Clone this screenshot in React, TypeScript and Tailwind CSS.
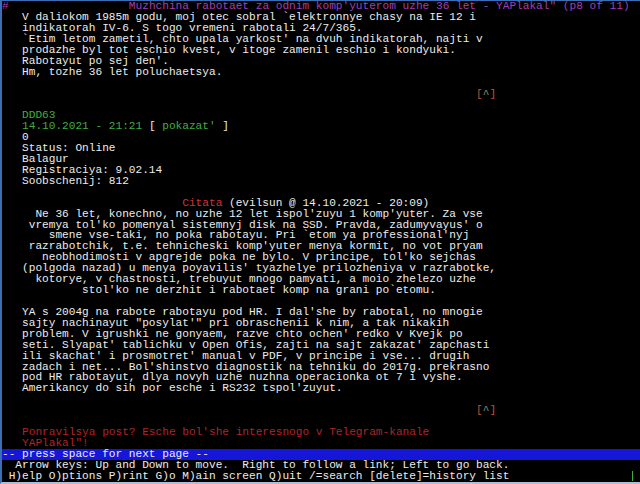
const W = 'text-[#ececec]';
const G = 'text-[#3fae3f]';
const R = 'text-[#d03434]';
const DR = 'text-[#b02424]';
const M = 'text-[#a43fb3]';

type Seg = [string, string];

function Line({ segs = [], bar = false, children }: { segs?: Seg[]; bar?: boolean; children?: React.ReactNode }) {
  return (
    <div className={`flex h-[10.93px] items-center whitespace-pre ${bar ? 'bg-[#1616d8]' : ''}`}>
      {segs.map(([t, c], i) => (
        <span key={i} className={c}>
          {t}
        </span>
      ))}
      {children}
    </div>
  );
}

function Up() {
  return (
    <Line
      segs={[
        [' '.repeat(71), W],
        ['[', 'text-[#c2503c]'],
        ['^', 'text-[#7a9a9a]'],
        [']', 'text-[#c2503c]'],
      ]}
    />
  );
}

const t = (s: string): Seg[] => [[s, W]];

export default function App() {
  return (
    <div className="h-[484px] w-[640px] overflow-hidden border-t border-b-2 border-l-2 border-t-[#3a6fb5] border-b-[#a9bfdc] border-l-[#3a6fb5] bg-black font-['Liberation_Mono',monospace] text-[11.13px]">
      <Line segs={[['#', M], [' '.repeat(18) + 'Muzhchina rabotaet za odnim komp\'yuterom uzhe 36 let - YAPlakal" (p8 of 11)', M]]} />
      <Line segs={t('   V daliokom 1985m godu, moj otec sobral `elektronnye chasy na IE 12 i')} />
      <Line segs={t('   indikatorah IV-6. S togo vremeni rabotali 24/7/365.')} />
      <Line segs={t("   `Etim letom zametil, chto upala yarkost' na dvuh indikatorah, najti v")} />
      <Line segs={t('   prodazhe byl tot eschio kvest, v itoge zamenil eschio i kondyuki.')} />
      <Line segs={t("   Rabotayut po sej den'.")} />
      <Line segs={t('   Hm, tozhe 36 let poluchaetsya.')} />
      <Line />
      <Up />
      <Line />
      <Line segs={[['   DDD63', G]]} />
      <Line
        segs={[
          ['   14.10.2021 - 21:21 ', G],
          ['[', W],
          [" pokazat' ", G],
          [']', W],
        ]}
      />
      <Line segs={t('   0')} />
      <Line segs={t('   Status: Online')} />
      <Line segs={t('   Balagur')} />
      <Line segs={t('   Registraciya: 9.02.14')} />
      <Line segs={t('   Soobschenij: 812')} />
      <Line />
      <Line segs={[[' '.repeat(27) + 'Citata', R], [' (evilsun @ 14.10.2021 - 20:09)', W]]} />
      <Line segs={t("     Ne 36 let, konechno, no uzhe 12 let ispol'zuyu 1 komp'yuter. Za vse")} />
      <Line segs={t("    vremya tol'ko pomenyal sistemnyj disk na SSD. Pravda, zadumyvayus' o")} />
      <Line segs={t("       smene vse-taki, no poka rabotayu. Pri `etom ya professional'nyj")} />
      <Line segs={t("    razrabotchik, t.e. tehnicheski komp'yuter menya kormit, no vot pryam")} />
      <Line segs={t("      neobhodimosti v apgrejde poka ne bylo. V principe, tol'ko sejchas")} />
      <Line segs={t("   (polgoda nazad) u menya poyavilis' tyazhelye prilozheniya v razrabotke,")} />
      <Line segs={t('     kotorye, v chastnosti, trebuyut mnogo pamyati, a moio zhelezo uzhe')} />
      <Line segs={t("            stol'ko ne derzhit i rabotaet komp na grani po`etomu.")} />
      <Line />
      <Line segs={t("   YA s 2004g na rabote rabotayu pod HR. I dal'she by rabotal, no mnogie")} />
      <Line segs={t('   sajty nachinayut "posylat\'" pri obraschenii k nim, a tak nikakih')} />
      <Line segs={t("   problem. V igrushki ne gonyaem, razve chto ochen' redko v Kvejk po")} />
      <Line segs={t("   seti. Slyapat' tablichku v Open Ofis, zajti na sajt zakazat' zapchasti")} />
      <Line segs={t("   ili skachat' i prosmotret' manual v PDF, v principe i vse... drugih")} />
      <Line segs={t("   zadach i net... Bol'shinstvo diagnostik na tehniku do 2017g. prekrasno")} />
      <Line segs={t('   pod HR rabotayut, dlya novyh uzhe nuzhna operacionka ot 7 i vyshe.')} />
      <Line segs={t("   Amerikancy do sih por esche i RS232 tspol'zuyut.")} />
      <Line />
      <Up />
      <Line />
      <Line segs={[["   Ponravilsya post? Esche bol'she interesnogo v Telegram-kanale", DR]]} />
      <Line segs={[['   YAPlakal"!', DR]]} />
      <Line bar segs={t('-- press space for next page --')} />
      <Line segs={t('  Arrow keys: Up and Down to move.  Right to follow a link; Left to go back.')} />
      <Line segs={t(' H)elp O)ptions P)rint G)o M)ain screen Q)uit /=search [delete]=history list')}>
        <span className="mr-[7px] ml-auto h-[10px] w-[1px] bg-[#3fae3f]" />
      </Line>
    </div>
  );
}
